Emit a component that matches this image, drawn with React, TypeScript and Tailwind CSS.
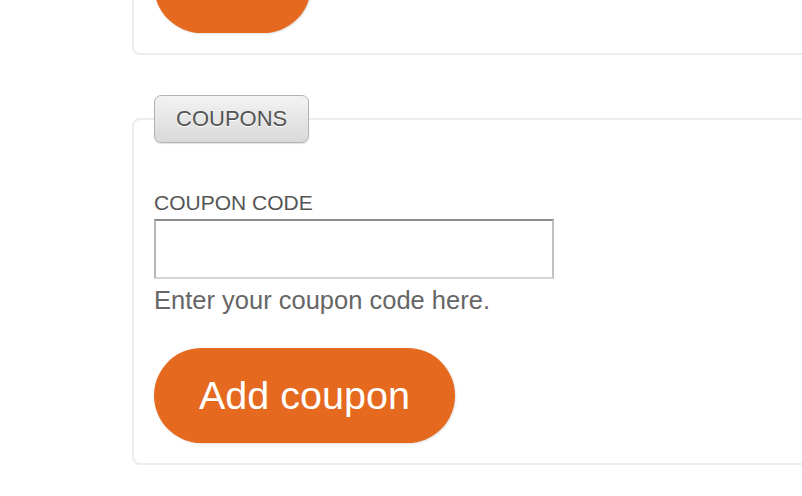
export default function App() {
  return (
    <div className="w-full h-[496px] overflow-hidden bg-white font-['Liberation_Sans',Arial,sans-serif]">
      <div className="pl-[132px]">
        {/* previous panel, top cut off */}
        <div className="w-[720px] mt-[-80px] border-2 border-[#ededed] rounded-[8px] pl-[20px] pt-[16px] pb-[20px]">
          <button className="h-[95px] px-[45px] pb-[14px] rounded-full bg-[#e56a1f] text-white text-[39px] leading-none shadow-[1px_1px_2px_rgba(0,0,0,0.12)]">
            Pay
          </button>
        </div>

        <fieldset className="w-[720px] mt-[40px] border-2 border-[#ededed] rounded-[8px] pl-[20px] pt-[48px] pb-[20px]">
          <legend className="h-[48px] px-[21px] leading-[46px] text-[22px] text-[#555] border border-[#b3b3b3] rounded-[7px] bg-gradient-to-b from-[#f3f3f3] to-[#d9d9d9] shadow-[0_1px_1px_rgba(0,0,0,0.12)] [text-shadow:0_1px_0_#fff]">
            COUPONS
          </legend>
          <label className="block text-[21px] leading-[24px] text-[#555] mb-[4px]">COUPON CODE</label>
          <input
            type="text"
            className="block w-[400px] h-[60px] border-2 border-t-[#8c8c8c] border-l-[#b6b6b6] border-r-[#c2c2c2] border-b-[#d4d4d4] bg-white outline-none"
          />
          <p className="mt-[6px] text-[25.5px] leading-[30px] text-[#666]">Enter your coupon code here.</p>
          <button className="mt-[33px] h-[95px] px-[45px] rounded-full bg-[#e56a1f] text-white text-[39.5px] leading-none shadow-[1px_1px_2px_rgba(0,0,0,0.12)]">
            Add coupon
          </button>
        </fieldset>
      </div>
    </div>
  );
}
